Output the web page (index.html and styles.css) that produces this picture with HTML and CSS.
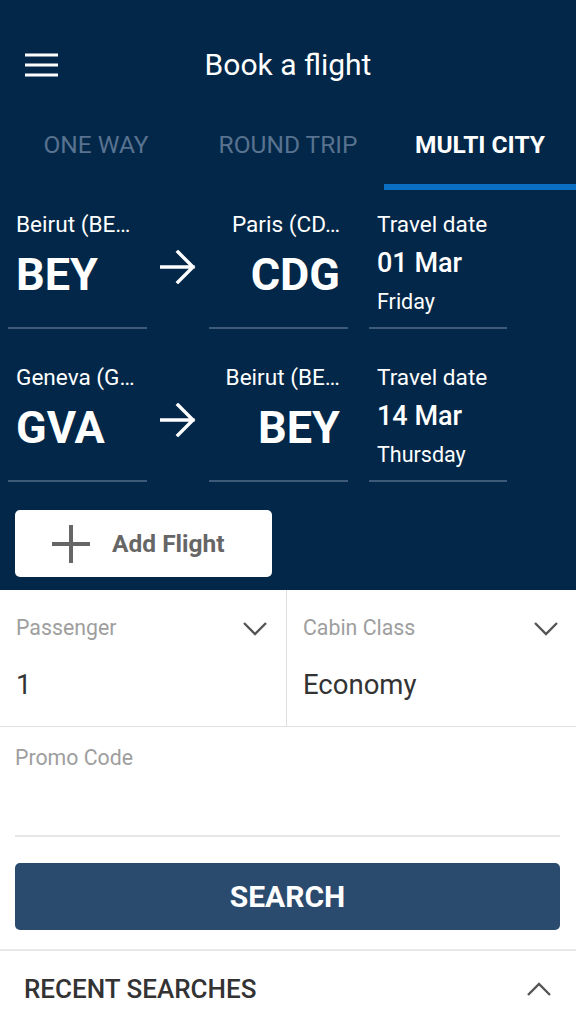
FILE: index.html
```html
<!DOCTYPE html>
<html lang="en">
<head>
<meta charset="utf-8">
<title>Book a flight</title>
<link rel="stylesheet" href="styles.css">
</head>
<body>
<div class="page">
  <section class="top">
    <header class="appbar">
      <div class="menu">
        <svg width="33" height="24" viewBox="0 0 33 24"><path d="M0 2H33M0 12H33M0 22H33" stroke="#fff" stroke-width="3.2" fill="none"/></svg>
      </div>
      <h1 class="title">Book a flight</h1>
      <div></div>
    </header>
    <nav class="tabs">
      <div class="tab">ONE WAY</div>
      <div class="tab">ROUND TRIP</div>
      <div class="tab active">MULTI CITY</div>
    </nav>
    <div class="legs">
      <div class="leg">
        <div class="field origin">
          <div class="lbl">Beirut (BE…</div>
          <div class="code">BEY</div>
        </div>
        <div class="arrow">
          <svg width="36" height="34" viewBox="0 0 36 34"><path d="M1 17H33M18 2L33 17L18 32" stroke="#fff" stroke-width="3.4" fill="none" stroke-linecap="square"/></svg>
        </div>
        <div class="field dest">
          <div class="lbl">Paris (CD…</div>
          <div class="code">CDG</div>
        </div>
        <div class="field date">
          <div class="lbl">Travel date</div>
          <div class="dval">01 Mar</div>
          <div class="day">Friday</div>
        </div>
      </div>
      <div class="leg">
        <div class="field origin">
          <div class="lbl">Geneva (G…</div>
          <div class="code">GVA</div>
        </div>
        <div class="arrow">
          <svg width="36" height="34" viewBox="0 0 36 34"><path d="M1 17H33M18 2L33 17L18 32" stroke="#fff" stroke-width="3.4" fill="none" stroke-linecap="square"/></svg>
        </div>
        <div class="field dest">
          <div class="lbl">Beirut (BE…</div>
          <div class="code">BEY</div>
        </div>
        <div class="field date">
          <div class="lbl">Travel date</div>
          <div class="dval">14 Mar</div>
          <div class="day">Thursday</div>
        </div>
      </div>
    </div>
    <div class="addwrap">
      <button class="addbtn">
        <svg width="38" height="38" viewBox="0 0 38 38"><path d="M19 0V38M0 19H38" stroke="#666" stroke-width="4" fill="none"/></svg>
        <span>Add Flight</span>
      </button>
    </div>
  </section>
  <section class="form">
    <div class="pax">
      <div class="col first">
        <div class="head"><span class="flabel">Passenger</span>
          <svg width="26" height="15" viewBox="0 0 26 15"><path d="M2 2L13 13L24 2" stroke="#555" stroke-width="2.4" fill="none"/></svg>
        </div>
        <div class="val">1</div>
      </div>
      <div class="col">
        <div class="head"><span class="flabel">Cabin Class</span>
          <svg width="26" height="15" viewBox="0 0 26 15"><path d="M2 2L13 13L24 2" stroke="#555" stroke-width="2.4" fill="none"/></svg>
        </div>
        <div class="val">Economy</div>
      </div>
    </div>
    <div class="promo"><span class="flabel">Promo Code</span></div>
    <button class="search">SEARCH</button>
    <div class="divider"></div>
    <div class="recent">
      <span>RECENT SEARCHES</span>
      <svg width="26" height="15" viewBox="0 0 26 15"><path d="M2 13L13 2L24 13" stroke="#555" stroke-width="2.4" fill="none"/></svg>
    </div>
  </section>
</div>
</body>
</html>
```

FILE: styles.css
```css
* { box-sizing: border-box; }
html, body { margin: 0; padding: 0; background: #fff; }
body { font-family: Roboto, "Noto Sans", "Liberation Sans", sans-serif; width: 576px; height: 1024px; overflow: hidden; }

.top { background: #022748; color: #fff; }

.appbar {
  height: 110px;
  padding-top: 20px;
  display: grid;
  grid-template-columns: 1fr auto 1fr;
  align-items: center;
}
.menu { padding-left: 25px; display: flex; align-items: center; }
.menu svg { display: block; }
.title { margin: 0; font-size: 30px; font-weight: 400; line-height: 40px; }

.tabs { display: flex; height: 80px; }
.tab {
  flex: 1;
  text-align: center;
  padding-top: 20px;
  font-size: 24.5px;
  line-height: 30px;
  color: #587290;
  border-bottom: 6px solid transparent;
}
.tab.active { color: #fff; font-weight: 700; border-bottom-color: #0a6fc2; }

.legs { padding-top: 22px; }
.leg { display: flex; padding-left: 8px; }
.leg + .leg { margin-top: 36px; }
.field { border-bottom: 2px solid #3e5a79; padding: 0 8px; }
.origin, .dest { width: 139px; }
.dest { text-align: right; }
.date { width: 138px; margin-left: 21px; }
.lbl { font-size: 22.6px; line-height: 26px; white-space: nowrap; }
.code { font-size: 45px; font-weight: 700; line-height: 52px; margin-top: 11px; padding-bottom: 26px; }
.dval { font-size: 27px; font-weight: 500; line-height: 32px; margin-top: 9px; }
.day { font-size: 21.5px; line-height: 26px; margin-top: 10px; padding-bottom: 12px; }
.arrow { width: 62px; padding-top: 38px; display: flex; justify-content: center; }
.arrow svg { display: block; }

.addwrap { padding: 28px 15px 13px; }
.addbtn {
  width: 257px;
  height: 67px;
  background: #fff;
  border: none;
  border-radius: 5px;
  display: flex;
  align-items: center;
  gap: 22px;
  padding: 0 0 0 37px;
  font-family: inherit;
  font-size: 24.5px;
  font-weight: 700;
  color: #666;
}
.addbtn svg { display: block; }

.form { color: #333; }
.pax { display: grid; grid-template-columns: 287px 1fr; height: 137px; border-bottom: 1px solid #e0e0e0; }
.col { padding: 24px 17px 0 16px; }
.col.first { border-right: 1px solid #dedede; padding-right: 18px; }
.head { display: flex; justify-content: space-between; align-items: center; height: 28px; }
.head svg { display: block; }
.flabel { font-size: 21.3px; line-height: 28px; color: #9e9e9e; }
.val { font-size: 27.5px; line-height: 32px; margin-top: 27px; color: #333; }

.promo { margin: 0 16px 0 15px; padding-top: 17px; height: 110px; border-bottom: 2px solid #e6e6e6; }
.promo .flabel { display: block; }

.search {
  display: block;
  margin: 26px 16px 0 15px;
  width: 545px;
  height: 67px;
  background: #2a4a6e;
  border: none;
  border-radius: 5px;
  color: #fff;
  font-family: inherit;
  font-size: 30px;
  font-weight: 700;
}
.divider { margin-top: 19px; height: 2px; background: #e8e8e8; }
.recent {
  display: flex;
  justify-content: space-between;
  align-items: center;
  padding: 22px 24px 0 24px;
  height: 54px;
  font-size: 26px;
  font-weight: 500;
  line-height: 32px;
  color: #333;
}
.recent svg { display: block; }
```
